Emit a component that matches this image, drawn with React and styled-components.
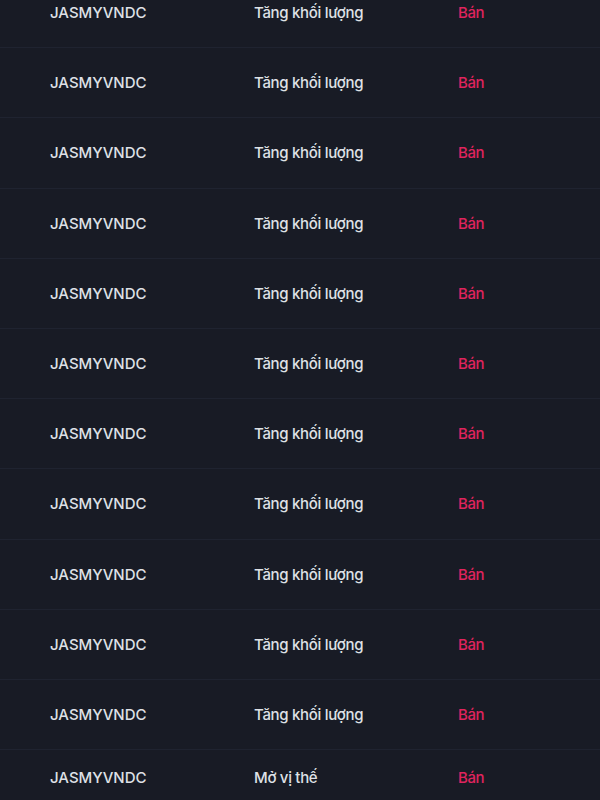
import React from "react";
import styled, { createGlobalStyle } from "styled-components";

const Global = createGlobalStyle`
  html, body { margin: 0; padding: 0; background: #181b25; }
  body { font-family: Inter, "Noto Sans", sans-serif; overflow: hidden; }
`;

const List = styled.div`
  margin-top: -22px;
  display: flex;
  flex-direction: column;
`;

const Row = styled.div`
  display: grid;
  grid-template-columns: 204px 204px 1fr;
  align-items: center;
  height: ${(p) => (p.$last ? "56px" : "70.2px")};
  padding-left: 50px;
  border-bottom: 1px solid ${(p) => (p.$last ? "transparent" : "#1f2330")};
  box-sizing: border-box;
  font-size: 15px;
  font-weight: 500;
  color: #dfe1e6;
`;

const Cell = styled.span`
  white-space: nowrap;
  letter-spacing: ${(p) => (p.$tight ? "-0.3px" : "0")};
`;

const Side = styled.span`
  color: #e0245e;
  letter-spacing: -0.4px;
`;

const rows = [
  ...Array.from({ length: 11 }, () => ({ pair: "JASMYVNDC", type: "Tăng khối lượng", side: "Bán" })),
  { pair: "JASMYVNDC", type: "Mở vị thế", side: "Bán" },
];

export default function App() {
  return (
    <>
      <Global />
      <List>
        {rows.map((r, i) => (
          <Row key={i} $last={i === rows.length - 1}>
            <Cell>{r.pair}</Cell>
            <Cell $tight>{r.type}</Cell>
            <Side>{r.side}</Side>
          </Row>
        ))}
      </List>
    </>
  );
}
